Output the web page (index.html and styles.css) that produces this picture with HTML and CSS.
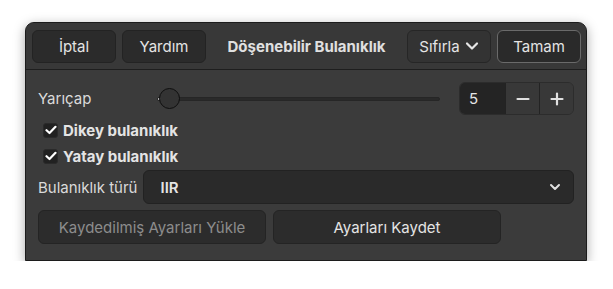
FILE: index.html
```html
<!DOCTYPE html>
<html lang="tr">
<head>
  <meta charset="UTF-8" />
  <title>Döşenebilir Bulanıklık</title>
  <link rel="stylesheet" href="styles.css">
</head>
<body>
  <div class="dialog">
    <div class="header">
      <button class="btn">İptal</button>
      <button class="btn">Yardım</button>
      <div class="title">Döşenebilir Bulanıklık</div>
      <button class="btn reset">Sıfırla
        <svg width="14" height="10" viewBox="0 0 14 10"><path d="M2 2.5 L7 7.5 L12 2.5" fill="none" stroke="#e6e6e6" stroke-width="2.2" stroke-linecap="round" stroke-linejoin="round"/></svg>
      </button>
      <button class="btn primary">Tamam</button>
    </div>

    <div class="content">
      <div class="row">
        <span class="label radius-label">Yarıçap</span>
        <div class="slider">
          <div class="track"><div class="fill"></div></div>
          <div class="knob"></div>
        </div>
        <div class="spin">
          <span class="spin-entry">5</span>
          <button class="spin-btn">
            <svg width="14" height="14" viewBox="0 0 14 14"><path d="M1.5 7 H12.5" stroke="#e0e0e0" stroke-width="2.2" stroke-linecap="round"/></svg>
          </button>
          <button class="spin-btn">
            <svg width="14" height="14" viewBox="0 0 14 14"><path d="M1.5 7 H12.5 M7 1.5 V12.5" stroke="#e0e0e0" stroke-width="2.2" stroke-linecap="round"/></svg>
          </button>
        </div>
      </div>

      <label class="check">
        <span class="box"><svg width="12" height="10" viewBox="0 0 12 10"><path d="M1.5 5.2 L4.5 8 L10.5 1.8" fill="none" stroke="#fff" stroke-width="2.2" stroke-linecap="round" stroke-linejoin="round"/></svg></span>
        Dikey bulanıklık
      </label>
      <label class="check">
        <span class="box"><svg width="12" height="10" viewBox="0 0 12 10"><path d="M1.5 5.2 L4.5 8 L10.5 1.8" fill="none" stroke="#fff" stroke-width="2.2" stroke-linecap="round" stroke-linejoin="round"/></svg></span>
        Yatay bulanıklık
      </label>

      <div class="row combo-row">
        <span class="label">Bulanıklık türü</span>
        <div class="combo">
          <span>IIR</span>
          <svg width="12" height="8" viewBox="0 0 12 8"><path d="M2 2 L6 6 L10 2" fill="none" stroke="#e0e0e0" stroke-width="2" stroke-linecap="round" stroke-linejoin="round"/></svg>
        </div>
      </div>

      <div class="actions">
        <button class="btn wide" disabled>Kaydedilmiş Ayarları Yükle</button>
        <button class="btn wide">Ayarları Kaydet</button>
      </div>
    </div>
  </div>
</body>
</html>
```

FILE: styles.css
```css
* {
  box-sizing: border-box;
}

body {
  margin: 0;
  background: #ffffff;
  font-family: 'Inter', 'Noto Sans', sans-serif;
  font-size: 15px;
  color: #dedede;
}

.dialog {
  margin: 22px 0 0 25px;
  width: 562px;
  height: 239px;
  background: #3a3a3a;
  border: 1px solid #1c1c1c;
  border-radius: 9px 9px 0 0;
  box-shadow: 0 3px 12px rgba(0, 0, 0, 0.35);
  display: flex;
  flex-direction: column;
}

.header {
  height: 47px;
  display: flex;
  align-items: center;
  gap: 6px;
  padding: 0 5px 0 6px;
  background: #383838;
  border-bottom: 1px solid #1e1e1e;
  border-radius: 8px 8px 0 0;
}

.btn {
  height: 33px;
  width: 84px;
  background: #2b2b2b;
  color: #e4e4e4;
  border: 1px solid #232323;
  border-radius: 6px;
  font-family: inherit;
  font-size: 15px;
  padding: 0;
  display: flex;
  align-items: center;
  justify-content: center;
  gap: 5px;
}

.btn.reset {
  background: #333333;
  border-color: #262626;
}

.btn.primary {
  background: #2a2a2a;
  border-color: #6a6a6a;
}

.title {
  flex: 1;
  text-align: center;
  font-weight: 700;
  color: #e0e0e0;
}

.content {
  flex: 1;
  padding: 12px 12px 0 12px;
  background: #3b3b3b;
}

.row {
  display: flex;
  align-items: center;
  height: 33px;
}

.label {
  color: #dadada;
  flex-shrink: 0;
}

.radius-label {
  width: 119px;
}

.slider {
  position: relative;
  flex: 1;
  margin-right: 19px;
  height: 22px;
  display: flex;
  align-items: center;
}

.track {
  width: 100%;
  height: 4px;
  background: #2a2a2a;
  border: 1px solid #262626;
  border-radius: 2px;
}

.fill {
  width: 3px;
  height: 100%;
  background: #a8a8a8;
}

.knob {
  position: absolute;
  left: 2px;
  top: 0;
  width: 21px;
  height: 21px;
  border-radius: 50%;
  background: #333333;
  border: 1px solid #0e0e0e;
}

.spin {
  height: 33px;
  width: 115px;
  display: flex;
  border: 1px solid #2c2c2c;
  border-radius: 6px;
  overflow: hidden;
}

.spin-entry {
  width: 45px;
  background: #242424;
  display: flex;
  align-items: center;
  padding-left: 9px;
  color: #e6e6e6;
}

.spin-btn {
  flex: 1;
  background: #383838;
  border: none;
  border-left: 1px solid #232323;
  padding: 0;
  display: flex;
  align-items: center;
  justify-content: center;
}

.check {
  display: flex;
  align-items: center;
  gap: 5px;
  height: 26px;
  padding-left: 5px;
  font-weight: 700;
  color: #e4e4e4;
}

.check:first-of-type {
  margin-top: 2px;
}

.box {
  width: 15px;
  height: 15px;
  background: #212121;
  border: 1px solid #2a2a2a;
  border-radius: 3px;
  display: flex;
  align-items: center;
  justify-content: center;
}

.combo-row {
  height: 34px;
  margin-top: 1px;
}

.combo {
  margin-left: 6px;
  flex: 1;
  height: 34px;
  background: #2a2a2a;
  border: 1px solid #222222;
  border-radius: 6px;
  display: flex;
  align-items: center;
  justify-content: space-between;
  padding: 0 12px 0 16px;
  font-weight: 600;
  color: #e4e4e4;
}

.actions {
  display: flex;
  gap: 7px;
  margin-top: 6px;
}

.btn.wide {
  width: 228px;
  height: 34px;
  background: #2c2c2c;
  border-color: #242424;
}

.btn.wide:disabled {
  color: #8c8c8c;
}
```
